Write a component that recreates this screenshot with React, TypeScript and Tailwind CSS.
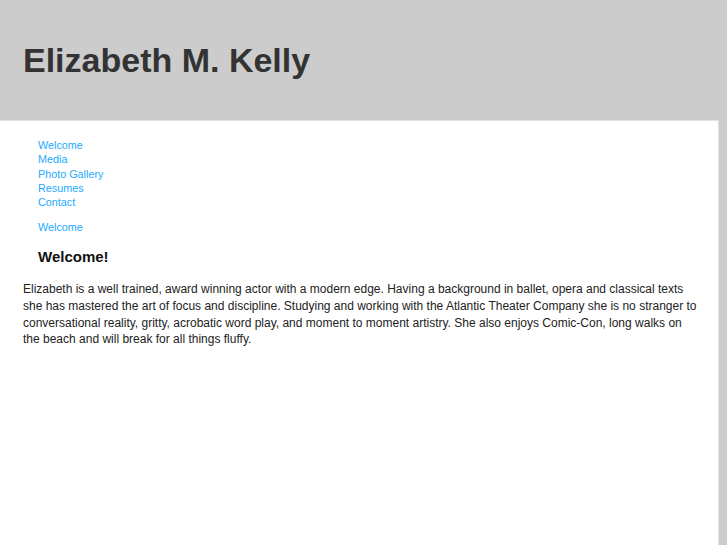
import React from "react";

export default function App() {
  const links = ["Welcome", "Media", "Photo Gallery", "Resumes", "Contact"];
  return (
    <div className="w-[727px] h-[545px] bg-[#cccccc] flex flex-col overflow-hidden" style={{ fontFamily: '"Liberation Sans", Arial, sans-serif' }}>
      <header className="h-[120px] shrink-0 pl-[23px] pt-[37px]">
        <h1 className="text-[34px] leading-[46px] font-bold text-[#333333]">Elizabeth M. Kelly</h1>
      </header>
      <div className="flex flex-1">
        <main className="w-[719px] bg-white border-t border-r border-[#e2e2e2] pt-[17px]">
          <ul className="pl-[38px] text-[10.8px] leading-[14.3px] text-[#22aaff]">
            {links.map((l) => (
              <li key={l}><a href="#">{l}</a></li>
            ))}
          </ul>
          <div className="pl-[38px] mt-[11px] text-[10.8px] leading-[14px] text-[#22aaff]">
            <a href="#">Welcome</a>
          </div>
          <h2 className="pl-[38px] mt-[13px] text-[15px] leading-[20px] font-bold text-[#111111]">Welcome!</h2>
          <p className="pl-[23px] pr-[19px] mt-[14px] text-[12px] leading-[16.6px] text-[#222222]">
            Elizabeth is a well trained, award winning actor with a modern edge. Having a background in ballet, opera and classical texts she has mastered the art of focus and discipline. Studying and working with the Atlantic Theater Company she is no stranger to conversational reality, gritty, acrobatic word play, and moment to moment artistry. She also enjoys Comic-Con, long walks on the beach and will break for all things fluffy.
          </p>
        </main>
      </div>
    </div>
  );
}
